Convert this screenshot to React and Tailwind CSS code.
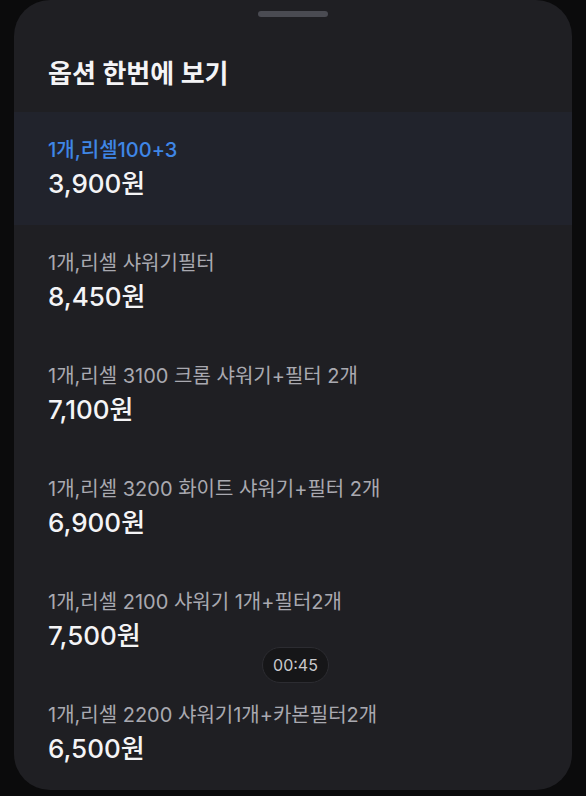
import React from 'react';

const options = [
  { name: '1개,리셀100+3', price: '3,900원', selected: true },
  { name: '1개,리셀 샤워기필터', price: '8,450원' },
  { name: '1개,리셀 3100 크롬 샤워기+필터 2개', price: '7,100원' },
  { name: '1개,리셀 3200 화이트 샤워기+필터 2개', price: '6,900원' },
  { name: '1개,리셀 2100 샤워기 1개+필터2개', price: '7,500원' },
  { name: '1개,리셀 2200 샤워기1개+카본필터2개', price: '6,500원' },
];

function OptionRow({ option }) {
  return (
    <div className={`px-[34px] pt-[26px] pb-[23px] ${option.selected ? 'bg-[#21232c]' : ''}`}>
      <div className={`text-[20px] leading-6 ${option.selected ? 'text-[#3f86e6] font-medium' : 'text-[#a9a9b0]'}`}>
        {option.name}
      </div>
      <div className="mt-1 text-[26px] leading-9 font-medium text-[#f4f4f6]">{option.price}</div>
    </div>
  );
}

export default function App() {
  return (
    <div
      className="w-[586px] h-[796px] bg-[#0b0b0c] px-[14px] pb-[6px] overflow-hidden"
      style={{ fontFamily: 'Inter, "Noto Sans CJK KR", sans-serif' }}
    >
      <div className="relative h-full bg-[#1f1f23] rounded-[36px] overflow-hidden">
        <div className="flex justify-center pt-[11px]">
          <div className="w-[70px] h-[6px] rounded-full bg-[#4a4b52]" />
        </div>
        <h1 className="px-[34px] pt-[41px] pb-[22px] text-[26px] leading-8 font-semibold text-[#f4f4f6]">
          옵션 한번에 보기
        </h1>
        <div>
          {options.map((o) => (
            <OptionRow key={o.name} option={o} />
          ))}
        </div>
        <div className="absolute left-[248px] top-[647px] w-[67px] h-[36px] rounded-full bg-[#161618] border border-[#2c2c31] flex items-center justify-center text-[16px] text-[#c9c9cd]">
          00:45
        </div>
      </div>
    </div>
  );
}
